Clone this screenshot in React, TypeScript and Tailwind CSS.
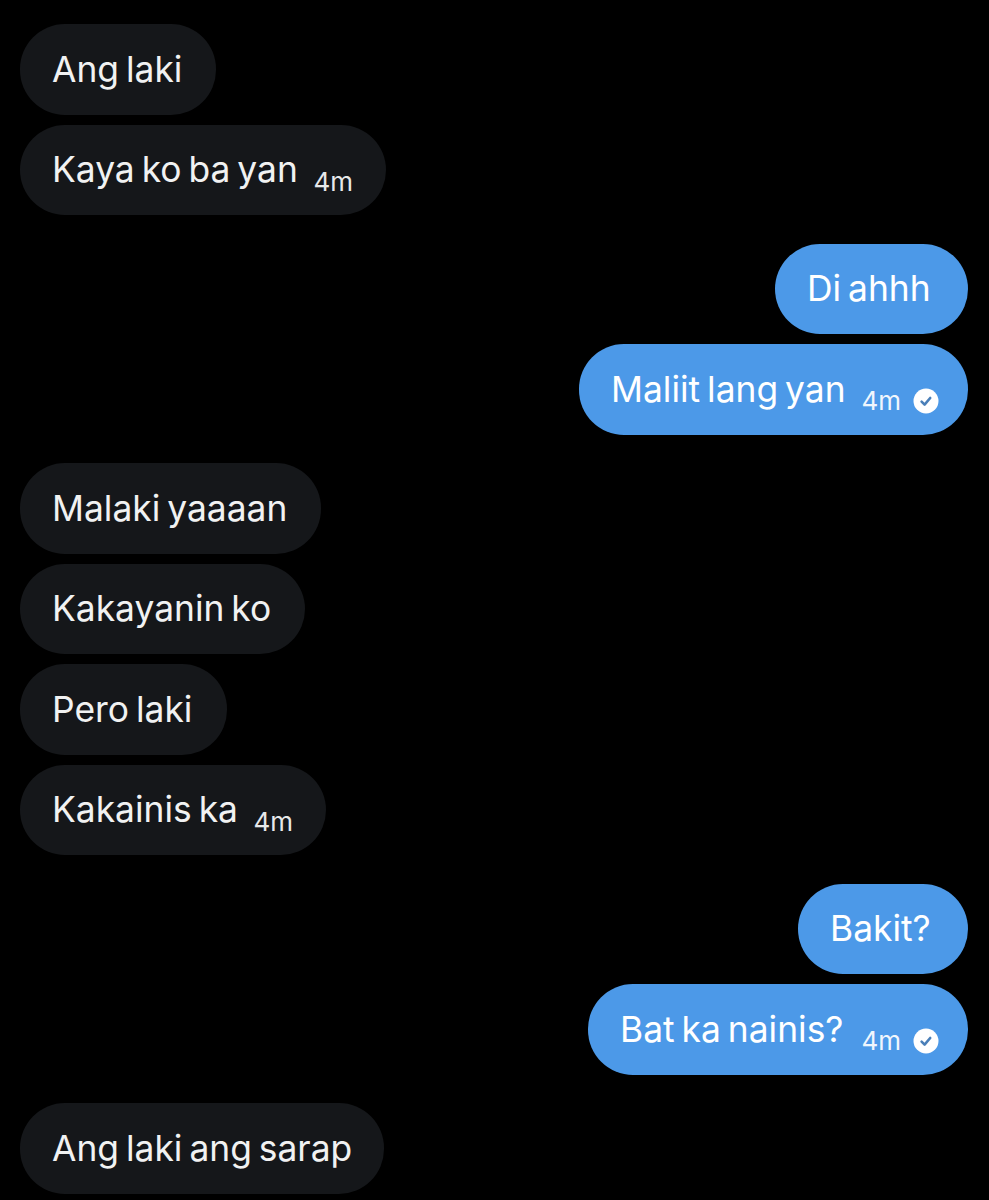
const font = "font-['Inter','Liberation_Sans',sans-serif]";

const Check = () => (
  <svg width="26" height="26" viewBox="0 0 26 26" className="ml-[12px] mt-[1px] shrink-0">
    <circle cx="13" cy="13" r="12.5" fill="#fff" />
    <path d="M8.6 13.6l3 3 5.6-6.6" fill="none" stroke="#4a7fb8" strokeWidth="2.6" strokeLinecap="round" strokeLinejoin="round" />
  </svg>
);

const Them = ({ text, time, mt = "mt-[10px]", w }: { text: string; time?: string; mt?: string; w: string }) => (
  <div className={`${mt} ${w} flex h-[90.5px] items-center rounded-[45px] bg-[#15171a] pl-[32px] pr-[33px] text-[35.4px] text-[#f1f2f2] [word-spacing:-3px]`}>
    <span className="whitespace-nowrap">{text}</span>
    {time && <span className="ml-auto mt-[23px] text-[26px] text-[#e7e9ea]">{time}</span>}
  </div>
);

const Me = ({ text, time, mt = "mt-[10px]", w }: { text: string; time?: string; mt?: string; w: string }) => (
  <div className={`${mt} ${w} flex h-[90.5px] items-center self-end rounded-[45px] bg-[#4c99e8] pl-[32px] pr-[29px] text-[35.4px] text-white [word-spacing:-3px]`}>
    <span className="whitespace-nowrap">{text}</span>
    {time && (
      <span className="ml-auto mt-[23px] flex items-center text-[26px] text-[#f0f6fd]">
        {time}
        <Check />
      </span>
    )}
  </div>
);

export default function App() {
  return (
    <div className={`flex h-[1200px] w-[989px] flex-col overflow-hidden bg-black pl-[20px] pr-[21px] pt-[24px] ${font}`}>
      <Them text="Ang laki" mt="mt-0" w="w-[196px]" />
      <Them text="Kaya ko ba yan" time="4m" w="w-[366px]" />
      <Me text="Di ahhh" mt="mt-[28.5px]" w="w-[193px]" />
      <Me text="Maliit lang yan" time="4m" w="w-[389px]" />
      <Them text="Malaki yaaaan" mt="mt-[28.5px]" w="w-[301px]" />
      <Them text="Kakayanin ko" w="w-[285px]" />
      <Them text="Pero laki" w="w-[207px]" />
      <Them text="Kakainis ka" time="4m" w="w-[306px]" />
      <Me text="Bakit?" mt="mt-[28.5px]" w="w-[170px]" />
      <Me text="Bat ka nainis?" time="4m" w="w-[380px]" />
      <Them text="Ang laki ang sarap" mt="mt-[28.5px]" w="w-[364px]" />
    </div>
  );
}
